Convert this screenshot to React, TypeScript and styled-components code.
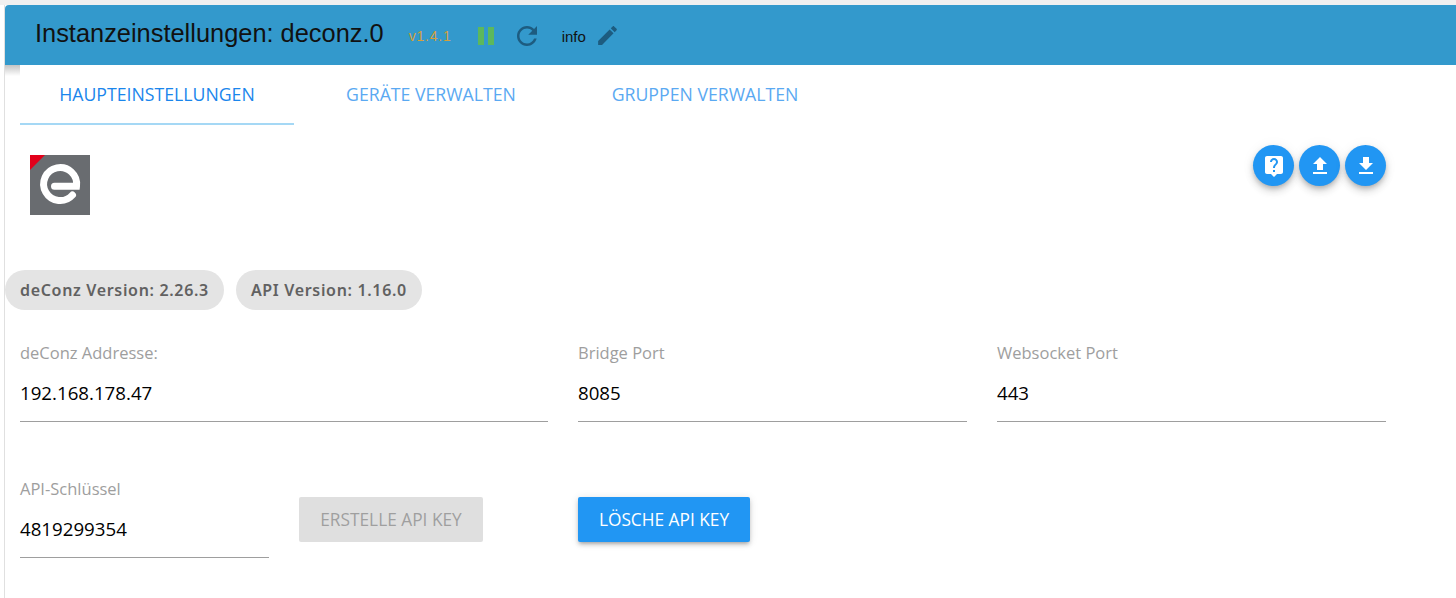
import React from 'react';
import styled, { createGlobalStyle } from 'styled-components';

const GlobalStyle = createGlobalStyle`
  html, body {
    margin: 0;
    padding: 0;
    background: #fff;
    overflow: hidden;
  }
  * {
    box-sizing: border-box;
  }
`;

const Page = styled.div`
  width: 1456px;
  height: 598px;
  background: #fff;
  padding: 5px 0 0 5px;
  position: relative;
  font-family: 'Open Sans', 'Noto Sans', sans-serif;
  &::before {
    content: '';
    position: absolute;
    left: 0;
    top: 0;
    right: 0;
    height: 5px;
    background: #f0f0f0;
  }
  &::after {
    content: '';
    position: absolute;
    left: 4px;
    top: 5px;
    bottom: 0;
    width: 1px;
    background: #e0e0e0;
  }
`;

const Header = styled.header`
  height: 60px;
  background: #3399cc;
  border-top-left-radius: 4px;
  display: flex;
  align-items: center;
  padding: 1px 0 0 30px;
  position: relative;
  z-index: 1;
`;

const Title = styled.h1`
  margin: -5px 0 0;
  font: 400 25.4px 'Liberation Sans', Arial, sans-serif;
  color: #111;
`;

const Version = styled.span`
  font: 400 14px 'Liberation Sans', Arial, sans-serif;
  color: #d4a03c;
  letter-spacing: 0.8px;
  margin-left: 25px;
  margin-right: 23px;
`;

const IconSlot = styled.span<{ $tint: string; $size: number; $gap?: number }>`
  display: inline-flex;
  color: ${p => p.$tint};
  margin-right: ${p => p.$gap ?? 0}px;
  svg {
    width: ${p => p.$size}px;
    height: ${p => p.$size}px;
    fill: currentColor;
    display: block;
  }
`;

const Mode = styled.span`
  font: 400 15px 'Liberation Sans', Arial, sans-serif;
  color: #111;
  margin-right: 9px;
  margin-top: 1px;
`;

const Main = styled.main`
  padding-left: 15px;
  position: relative;
  &::before {
    content: '';
    position: absolute;
    left: 0;
    top: 0;
    width: 15px;
    height: 11px;
    background: linear-gradient(#c4c4c4, #fff);
  }
`;

const Tabs = styled.nav`
  display: flex;
  height: 60px;
`;

const Tab = styled.div<{ $active?: boolean }>`
  width: 274px;
  padding-top: 17px;
  text-align: center;
  font-size: 17.7px;
  line-height: 24px;
  color: ${p => (p.$active ? '#1a86ec' : '#5aa9f2')};
  border-bottom: ${p => (p.$active ? '2px solid #a5d8f5' : '0')};
`;

const TopRow = styled.div`
  display: flex;
  justify-content: space-between;
  align-items: flex-start;
  width: 1366px;
  padding-left: 10px;
  height: 145px;
`;

const Logo = styled.svg`
  width: 60px;
  height: 60px;
  margin-top: 30px;
  display: block;
`;

const RoundButtons = styled.div`
  display: flex;
  gap: 5px;
  margin-top: 20px;
`;

const RoundButton = styled.button`
  width: 41px;
  height: 41px;
  padding: 0;
  border: 0;
  border-radius: 50%;
  background: #2196f3;
  color: #fff;
  display: flex;
  align-items: center;
  justify-content: center;
  box-shadow: 0 3px 5px -1px rgba(0, 0, 0, 0.2), 0 5px 8px 0 rgba(0, 0, 0, 0.14),
    0 1px 14px 0 rgba(0, 0, 0, 0.06);
  svg {
    width: 24px;
    height: 24px;
    fill: currentColor;
  }
`;

const Chips = styled.div`
  display: flex;
  gap: 12px;
  margin-left: -15px;
`;

const Chip = styled.div`
  height: 40px;
  border-radius: 20px;
  background: #e4e4e4;
  color: #616161;
  padding: 0 15px;
  display: flex;
  align-items: center;
  font: 600 16px 'Noto Sans', sans-serif;
  letter-spacing: 0.67px;
`;

const FieldRow = styled.div`
  display: flex;
  gap: 30px;
  width: 1366px;
  margin-top: 31px;
`;

const Field = styled.div<{ $width: number }>`
  width: ${p => p.$width}px;
  height: 81px;
  border-bottom: 1px solid #9e9e9e;
`;

const FieldLabel = styled.div`
  font-size: 16.5px;
  line-height: 24px;
  color: #9e9e9e;
`;

const FieldValue = styled.div`
  font-size: 18.7px;
  line-height: 26px;
  color: #000;
  margin-top: 15px;
`;

const KeyRow = styled.div`
  display: flex;
  margin-top: 55px;
  align-items: flex-start;
`;

const ActionButton = styled.button<{ $disabled?: boolean; $left: number; $width: number }>`
  width: ${p => p.$width}px;
  height: 45px;
  margin-left: ${p => p.$left}px;
  margin-top: 20px;
  padding: 0;
  border: 0;
  border-radius: 2px;
  font: 400 17.3px 'Open Sans', 'Noto Sans', sans-serif;
  background: ${p => (p.$disabled ? '#dfdfdf' : '#2196f3')};
  color: ${p => (p.$disabled ? '#9f9f9f' : '#fff')};
  box-shadow: ${p =>
    p.$disabled ? 'none' : '0 3px 3px -2px rgba(0,0,0,.2), 0 3px 4px 0 rgba(0,0,0,.14), 0 1px 8px 0 rgba(0,0,0,.12)'};
`;

const App: React.FC = () => (
  <Page>
    <GlobalStyle />
    <Header>
      <Title>Instanzeinstellungen: deconz.0</Title>
      <Version>v1.4.1</Version>
      <IconSlot $tint="#5cb85c" $size={24} $gap={13}>
        <svg viewBox="0 0 24 24">
          <path d="M3 3h6v18H3zM13 3h6v18h-6z" />
        </svg>
      </IconSlot>
      <IconSlot $tint="#1d5c80" $size={30} $gap={20}>
        <svg viewBox="0 0 24 24">
          <path d="M17.65 6.35C16.2 4.9 14.21 4 12 4c-4.42 0-7.99 3.58-7.99 8s3.57 8 7.99 8c3.73 0 6.84-2.55 7.73-6h-2.08c-.82 2.33-3.04 4-5.65 4-3.31 0-6-2.69-6-6s2.69-6 6-6c1.66 0 3.14.69 4.22 1.78L13 11h7V4l-2.35 2.35z" />
        </svg>
      </IconSlot>
      <Mode>info</Mode>
      <IconSlot $tint="#1d5c80" $size={25}>
        <svg viewBox="0 0 24 24">
          <path d="M3 17.25V21h3.75L17.81 9.94l-3.75-3.75L3 17.25zM20.71 7.04c.39-.39.39-1.02 0-1.41l-2.34-2.34c-.39-.39-1.02-.39-1.41 0l-1.83 1.83 3.75 3.75 1.83-1.83z" />
        </svg>
      </IconSlot>
    </Header>
    <Main>
      <Tabs>
        <Tab $active>HAUPTEINSTELLUNGEN</Tab>
        <Tab>GERÄTE VERWALTEN</Tab>
        <Tab>GRUPPEN VERWALTEN</Tab>
      </Tabs>
      <TopRow>
        <Logo viewBox="0 0 60 60">
          <rect width="60" height="60" fill="#696c70" />
          <path d="M0 0h15L0 15z" fill="#e2001a" />
          <path
            d="M24.500 31.200H46.500A16.500 16.500 0 1 0 42.500 40"
            fill="none"
            stroke="#fff"
            strokeWidth="7"
            strokeLinecap="round"
          />
        </Logo>
        <RoundButtons>
          <RoundButton>
            <svg viewBox="0 0 24 24">
              <path d="M19 2H5c-1.11 0-2 .9-2 2v14c0 1.1.89 2 2 2h4l3 3 3-3h4c1.100 0 2-.9 2-2V4c0-1.100-.9-2-2-2zm-6 16h-2v-2h2v2zm2.070-7.750l-.9.92C13.450 11.900 13 12.500 13 14h-2v-.5c0-1.100.45-2.100 1.170-2.830l1.240-1.260c.37-.36.59-.86.59-1.410 0-1.100-.9-2-2-2s-2 .9-2 2H8c0-2.210 1.790-4 4-4s4 1.790 4 4c0 .88-.36 1.680-.93 2.250z" />
            </svg>
          </RoundButton>
          <RoundButton>
            <svg viewBox="0 0 24 24">
              <path d="M9 16h6v-6h4l-7-7-7 7h4zm-4 2h14v2H5z" />
            </svg>
          </RoundButton>
          <RoundButton>
            <svg viewBox="0 0 24 24">
              <path d="M19 9h-4V3H9v6H5l7 7 7-7zM5 18v2h14v-2H5z" />
            </svg>
          </RoundButton>
        </RoundButtons>
      </TopRow>
      <Chips>
        <Chip>deConz Version: 2.26.3</Chip>
        <Chip>API Version: 1.16.0</Chip>
      </Chips>
      <FieldRow>
        <Field $width={528}>
          <FieldLabel>deConz Addresse:</FieldLabel>
          <FieldValue>192.168.178.47</FieldValue>
        </Field>
        <Field $width={389}>
          <FieldLabel>Bridge Port</FieldLabel>
          <FieldValue>8085</FieldValue>
        </Field>
        <Field $width={389}>
          <FieldLabel>Websocket Port</FieldLabel>
          <FieldValue>443</FieldValue>
        </Field>
      </FieldRow>
      <KeyRow>
        <Field $width={249}>
          <FieldLabel>API-Schlüssel</FieldLabel>
          <FieldValue>4819299354</FieldValue>
        </Field>
        <ActionButton $disabled $left={30} $width={184}>
          ERSTELLE API KEY
        </ActionButton>
        <ActionButton $left={95} $width={172}>
          LÖSCHE API KEY
        </ActionButton>
      </KeyRow>
    </Main>
  </Page>
);

export default App;
